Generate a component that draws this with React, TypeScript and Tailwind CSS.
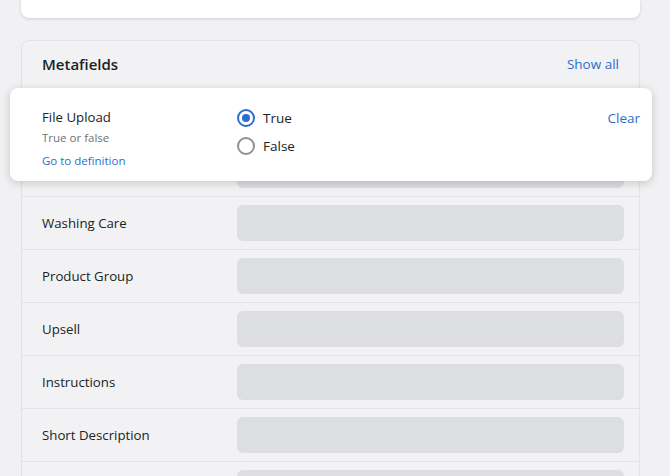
const rows = ["", "", "Washing Care", "Product Group", "Upsell", "Instructions", "Short Description", ""];

function Radio({ checked }: { checked: boolean }) {
  return (
    <span
      className={
        "flex h-[18px] w-[18px] items-center justify-center rounded-full border-2 " +
        (checked ? "border-[#2c6ecb]" : "border-[#8c9196]")
      }
    >
      {checked && <span className="h-[8px] w-[8px] rounded-full bg-[#2c6ecb]" />}
    </span>
  );
}

export default function App() {
  return (
    <div
      className="h-[476px] w-[670px] overflow-hidden bg-[#f1f1f3] text-[#202223]"
      style={{ fontFamily: '"Open Sans", "Noto Sans", sans-serif' }}
    >
      <div className="px-[21px] pr-[30px]">
        <div className="h-[18px] rounded-b-lg bg-white shadow-[0_1px_3px_rgba(0,0,0,0.15)]" />

        <div className="relative mt-[22px] rounded-lg border border-[#e1e3e5] bg-[#f2f2f4]">
          <div className="flex h-[49px] items-center justify-between px-5 pb-[2px]">
            <h2 className="text-[15px] font-semibold">Metafields</h2>
            <button className="text-[13.5px] text-[#2c6ecb]">Show all</button>
          </div>

          {rows.map((label, i) => (
            <div key={i} className="flex h-[53px] items-start border-t border-[#e1e3e5] pt-[8px] pl-5 pr-[15px]">
              <div className="w-[195px] pt-[9px] text-[13.25px]">{label}</div>
              <div className="h-[36px] flex-1 rounded-md bg-[#dcdee2]" />
            </div>
          ))}

          {/* expanded field popover */}
          <div className="absolute left-[-12px] top-[47px] flex h-[93px] w-[642px] rounded-lg bg-white pl-8 pr-3 pt-[19px] shadow-[0_2px_10px_rgba(0,0,0,0.18)]">
            <div className="w-[195px]">
              <div className="text-[13.25px] leading-5">File Upload</div>
              <div className="mt-[3px] text-[11.5px] leading-4 text-[#6d7175]">True or false</div>
              <a className="mt-[7px] block text-[11.5px] leading-4 text-[#2c6ecb]">Go to definition</a>
            </div>
            <div className="flex flex-1 flex-col gap-[10px] pt-[2px]">
              <label className="flex items-center gap-[8px] text-[13.5px] leading-[18px]">
                <Radio checked />
                True
              </label>
              <label className="flex items-center gap-[8px] text-[13.5px] leading-[18px]">
                <Radio checked={false} />
                False
              </label>
            </div>
            <button className="self-start pt-[1px] text-[13.5px] leading-5 text-[#2c6ecb]">Clear</button>
          </div>
        </div>
      </div>
    </div>
  );
}
